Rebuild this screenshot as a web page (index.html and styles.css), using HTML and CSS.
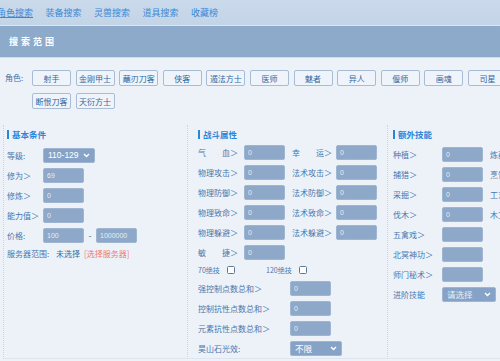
FILE: index.html
```html
<!DOCTYPE html>
<html lang="zh">
<head>
<meta charset="utf-8">
<link rel="stylesheet" href="styles.css">
</head>
<body>
<div class="page">
  <div class="tabs">
    <span class="tab active">角色搜索</span>
    <span class="tab">装备搜索</span>
    <span class="tab">灵兽搜索</span>
    <span class="tab">道具搜索</span>
    <span class="tab">收藏榜</span>
  </div>
  <div class="banner">搜索范围</div>
  <div class="roles">
    <div class="roles-label">角色:</div>
    <div class="role-list">
      <span class="role">射手</span>
      <span class="role">金刚甲士</span>
      <span class="role">蘸刃刀客</span>
      <span class="role">侠客</span>
      <span class="role">遁法方士</span>
      <span class="role">医师</span>
      <span class="role">魅者</span>
      <span class="role">异人</span>
      <span class="role">偃师</span>
      <span class="role">画魂</span>
      <span class="role">司星</span>
      <span class="role">断恨刀客</span>
      <span class="role">天衍方士</span>
    </div>
  </div>
  <div class="cols">
    <div class="col col-basic">
      <div class="col-title">基本条件</div>
      <div class="row"><span class="lbl">等级:</span><div class="sel sel-level"><span>110-129</span><svg width="7" height="5" viewBox="0 0 7 5"><path d="M1 1 L3.5 3.5 L6 1" fill="none" stroke="#fff" stroke-width="1.4"/></svg></div></div>
      <div class="row"><span class="lbl">修为＞</span><input class="inp" value="69"></div>
      <div class="row"><span class="lbl">修炼＞</span><input class="inp" value="0"></div>
      <div class="row"><span class="lbl">能力值＞</span><input class="inp" value="0"></div>
      <div class="row"><span class="lbl">价格:</span><input class="inp" value="100"><span class="dash">-</span><input class="inp" value="1000000"></div>
      <div class="row row-server"><span class="lbl lbl-server">服务器范围:</span><span class="server-val">未选择</span><span class="server-link">[选择服务器]</span></div>
    </div>
    <div class="col col-battle">
      <div class="col-title">战斗属性</div>
      <div class="row"><span class="lbl">气　　血＞</span><input class="inp" value="0"><span class="lbl second">幸　　运＞</span><input class="inp" value="0"></div>
      <div class="row"><span class="lbl">物理攻击＞</span><input class="inp" value="0"><span class="lbl second">法术攻击＞</span><input class="inp" value="0"></div>
      <div class="row"><span class="lbl">物理防御＞</span><input class="inp" value="0"><span class="lbl second">法术防御＞</span><input class="inp" value="0"></div>
      <div class="row"><span class="lbl">物理致命＞</span><input class="inp" value="0"><span class="lbl second">法术致命＞</span><input class="inp" value="0"></div>
      <div class="row"><span class="lbl">物理躲避＞</span><input class="inp" value="0"><span class="lbl second">法术躲避＞</span><input class="inp" value="0"></div>
      <div class="row"><span class="lbl">敏　　捷＞</span><input class="inp" value="0"></div>
      <div class="chk-row">
        <span class="chk-group"><span class="chk-text">70绝技</span><span class="chk"></span></span>
        <span class="chk-group"><span class="chk-text">120绝技</span><span class="chk"></span></span>
      </div>
      <div class="row"><span class="lbl long">强控制点数总和＞</span><input class="inp" value="0"></div>
      <div class="row"><span class="lbl long">控制抗性点数总和＞</span><input class="inp" value="0"></div>
      <div class="row"><span class="lbl long">元素抗性点数总和＞</span><input class="inp" value="0"></div>
      <div class="row"><span class="lbl long">昊山石光效:</span><div class="sel"><span>不限</span><svg width="7" height="5" viewBox="0 0 7 5"><path d="M1 1 L3.5 3.5 L6 1" fill="none" stroke="#fff" stroke-width="1.4"/></svg></div></div>
    </div>
    <div class="col col-extra">
      <div class="col-title">额外技能</div>
      <div class="row"><span class="lbl">种植＞</span><input class="inp" value="0"><span class="lbl second">炼药＞</span><input class="inp" value="0"></div>
      <div class="row"><span class="lbl">捕猎＞</span><input class="inp" value="0"><span class="lbl second">烹饪＞</span><input class="inp" value="0"></div>
      <div class="row"><span class="lbl">采掘＞</span><input class="inp" value="0"><span class="lbl second">工艺＞</span><input class="inp" value="0"></div>
      <div class="row"><span class="lbl">伐木＞</span><input class="inp" value="0"><span class="lbl second">木工＞</span><input class="inp" value="0"></div>
      <div class="row"><span class="lbl">五禽戏＞</span><input class="inp" value=""></div>
      <div class="row"><span class="lbl">北冥神功＞</span><input class="inp" value=""></div>
      <div class="row"><span class="lbl">师门秘术＞</span><input class="inp" value=""></div>
      <div class="row"><span class="lbl">进阶技能</span><div class="sel sel-adv"><span>请选择</span><svg width="7" height="5" viewBox="0 0 7 5"><path d="M1 1 L3.5 3.5 L6 1" fill="none" stroke="#fff" stroke-width="1.4"/></svg></div><span class="lbl second">2</span></div>
    </div>
  </div>
</div>
</body>
</html>
```

FILE: styles.css
```css
html, body {
  margin: 0;
  padding: 0;
  overflow: hidden;
  background: #edf2f9;
}
body {
  font-family: "Noto Sans CJK SC", "Liberation Sans", sans-serif;
}
.page {
  width: 600px;
}
.tabs {
  height: 25px;
  background: linear-gradient(#cadaeb, #c3d4e7);
  border-bottom: 1px solid #dbe5f0;
  display: flex;
  align-items: center;
  gap: 12.5px;
  margin-left: -3px;
  font-size: 9px;
  color: #3b87d6;
}
.tab.active {
  text-decoration: underline;
}
.banner {
  height: 31px;
  background: #8eaaca;
  color: #fff;
  font-size: 9px;
  font-weight: bold;
  letter-spacing: 3px;
  padding-left: 9px;
  display: flex;
  align-items: center;
  border-bottom: 1px solid #d3dde9;
}
.roles {
  display: flex;
  margin-top: 12px;
  padding-left: 5px;
}
.roles-label {
  width: 27px;
  font-size: 8px;
  line-height: 16px;
  color: #3f6fa6;
}
.role-list {
  display: flex;
  flex-wrap: wrap;
  width: 480px;
  gap: 7px 4.6px;
}
.role {
  width: 39px;
  height: 16px;
  box-sizing: border-box;
  border: 1px solid #a9bcd5;
  border-radius: 2px;
  background: #eff4fa;
  font-size: 8px;
  color: #2f67a3;
  display: flex;
  align-items: center;
  justify-content: center;
}
.cols {
  display: flex;
  margin-top: 16px;
  padding-left: 3px;
}
.col {
  box-sizing: border-box;
  height: 234px;
  border-left: 1px dotted #cbd5e2;
  border-bottom: 1px solid #dde5ef;
  padding-top: 3px;
  flex: none;
}
.col-basic { width: 184px; padding-left: 3px; }
.col-battle { width: 200px; padding-left: 10px; }
.col-extra { width: 200px; padding-left: 5px; border-right: 1px dotted #cbd5e2; }
.col-title {
  display: flex;
  align-items: center;
  height: 12px;
  font-size: 8.5px;
  font-weight: bold;
  color: #2b86d9;
}
.col-title::before {
  content: "";
  width: 2px;
  height: 9px;
  background: #2b86d9;
  margin-right: 3px;
}
.col-basic .col-title { margin-bottom: 5px; }
.col-battle .col-title { margin-bottom: 2px; }
.col-extra .col-title { margin-bottom: 4px; }
.row {
  display: flex;
  align-items: center;
  height: 20px;
}
.lbl {
  flex: none;
  font-size: 8px;
  color: #4677ad;
  white-space: nowrap;
}
.col-basic .lbl { width: 36px; }
.col-battle .lbl { width: 46px; }
.col-battle .lbl.second { width: 44px; margin-left: 7px; }
.col-battle .lbl.long { width: 92px; }
.col-extra .lbl { width: 49px; }
.col-extra .lbl.second { margin-left: 7px; }
.inp {
  flex: none;
  width: 41px;
  height: 15px;
  box-sizing: border-box;
  border: 1px solid #a0b5cf;
  border-radius: 2px;
  background: #8da8c8;
  color: #e6edf6;
  font-family: "Liberation Sans", sans-serif;
  font-size: 7px;
  padding: 0 3px;
  margin: 0;
  outline: none;
}
.dash {
  width: 12px;
  text-align: center;
  font-size: 9px;
  color: #4677ad;
}
.sel {
  flex: none;
  width: 52px;
  height: 15px;
  box-sizing: border-box;
  background: #86a3c7;
  border: 1px solid #a0b5cf;
  border-radius: 2px;
  color: #fff;
  display: flex;
  align-items: center;
  justify-content: space-between;
  padding: 0 4px;
  font-size: 8.5px;
}
.sel-level {
  font-family: "Liberation Sans", sans-serif;
}
.sel-adv { width: 54px; color: #e8eef6; }
.row-server { height: 16px; }
.col-basic .lbl-server { width: 49px; }
.server-val {
  font-size: 8px;
  color: #3b6aa0;
  margin-right: 4px;
}
.server-link {
  font-size: 8px;
  color: #ef7b6b;
}
.chk-row {
  display: flex;
  align-items: center;
  height: 16px;
  font-size: 7px;
  color: #4677ad;
}
.chk-group {
  display: flex;
  align-items: center;
  width: 68px;
}
.chk-text { width: 29px; }
.chk-group + .chk-group .chk-text { width: 33px; }
.chk {
  width: 8px;
  height: 8px;
  box-sizing: border-box;
  border: 1px solid #5f7898;
  border-radius: 1.5px;
  background: #fff;
}
```
